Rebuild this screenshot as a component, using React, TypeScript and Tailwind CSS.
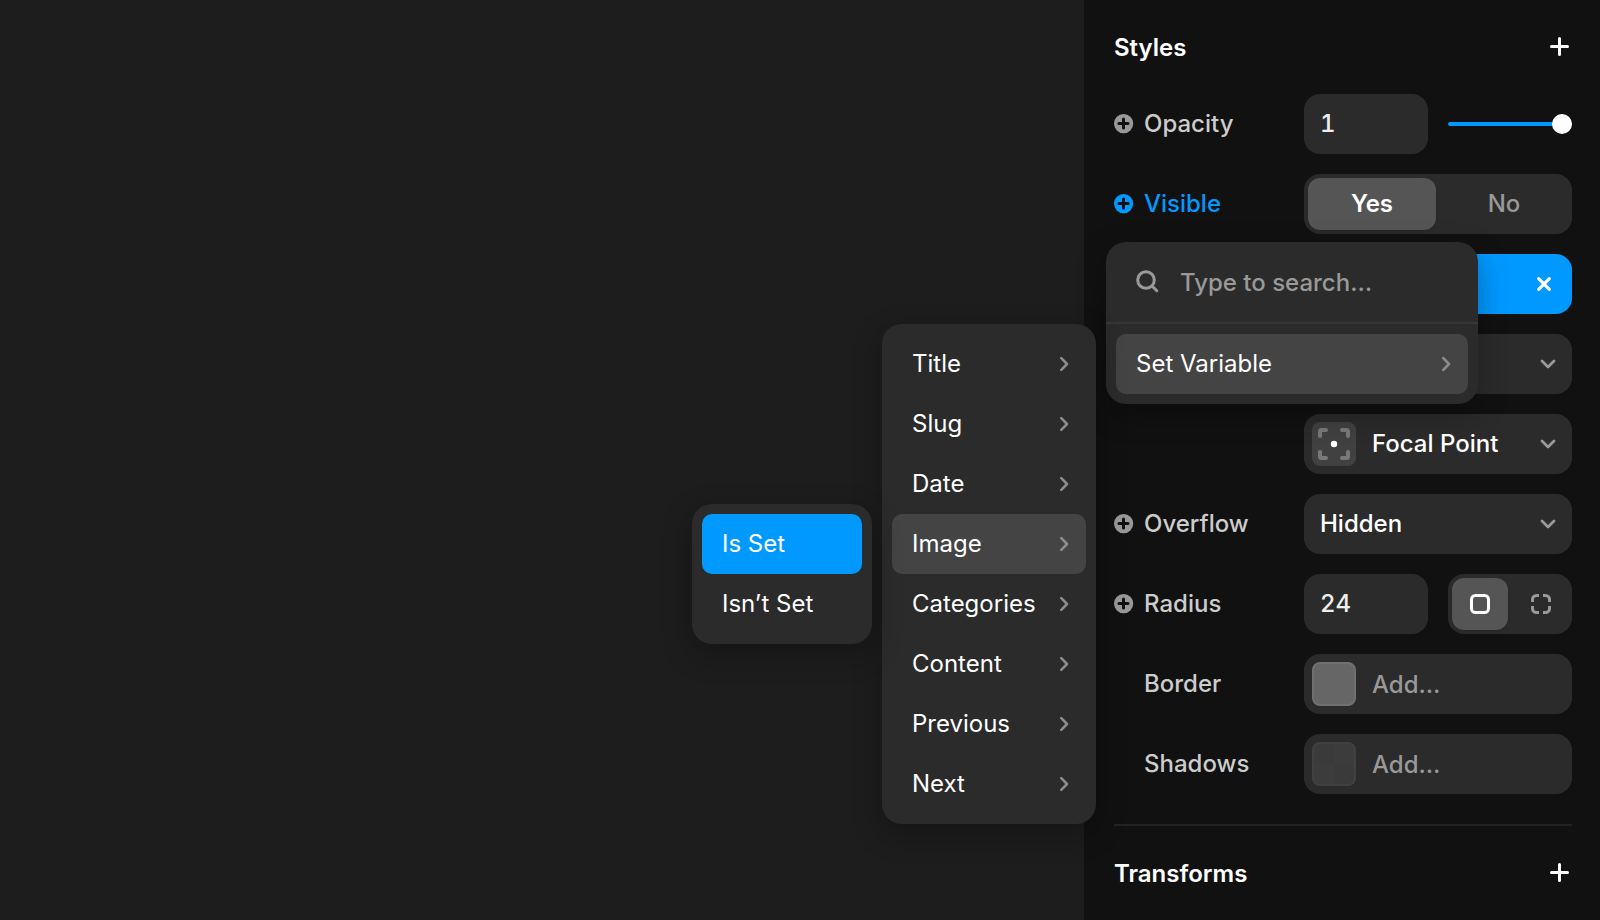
import { useId, type ReactNode } from "react";

function PlusIcon() {
  return (
    <svg width="20" height="20" viewBox="0 0 20 20" fill="none" stroke="currentColor" strokeWidth="3" strokeLinecap="round" aria-hidden="true">
      <path d="M9.500 1.500v16M1.500 9.500h16" />
    </svg>
  );
}

function AddBadgeIcon() {
  return (
    <svg width="20" height="20" viewBox="0 0 20 20" aria-hidden="true">
      <circle cx="9.600" cy="9.600" r="9.600" fill="currentColor" />
      <path d="M9.500 4.900v9.200M4.900 9.500h9.200" stroke="#111" strokeWidth="3" strokeLinecap="round" />
    </svg>
  );
}

function ChevronRight() {
  return (
    <svg width="10" height="16" viewBox="0 0 10 16" fill="none" stroke="#8c8c8c" strokeWidth="2.6" strokeLinecap="round" strokeLinejoin="round" aria-hidden="true">
      <path d="M1.300 2.200L7 8l-5.700 5.800" />
    </svg>
  );
}

function ChevronDown() {
  return (
    <svg className="pointer-events-none col-start-1 row-start-1 mr-4 justify-self-end" width="16" height="12" viewBox="0 0 16 12" fill="none" stroke="#999" strokeWidth="2.8" strokeLinecap="round" strokeLinejoin="round" aria-hidden="true">
      <path d="M2 3l6 6 6-6" />
    </svg>
  );
}

function CloseIcon() {
  return (
    <svg width="16" height="16" viewBox="0 0 16 16" fill="none" stroke="currentColor" strokeWidth="3.2" strokeLinecap="round" aria-hidden="true">
      <path d="M2.7 2.7l10.6 10.6M13.3 2.7L2.7 13.3" />
    </svg>
  );
}

function SearchIcon() {
  return (
    <svg className="shrink-0" width="24" height="24" viewBox="0 0 24 24" fill="none" stroke="#999" strokeWidth="3" strokeLinecap="round" aria-hidden="true">
      <circle cx="10" cy="10" r="8.300" />
      <path d="M16.200 16.200l4.600 4.600" />
    </svg>
  );
}

function FocalIcon() {
  return (
    <svg width="32" height="32" viewBox="0 0 32 32" fill="none" aria-hidden="true">
      <path
        d="M2 8V3.500A1.500 1.500 0 0 1 3.500 2H8M24 2h4.500A1.500 1.500 0 0 1 30 3.500V8M30 24v4.500a1.500 1.500 0 0 1-1.500 1.500H24M8 30H3.500A1.500 1.500 0 0 1 2 28.500V24"
        stroke="#797979"
        strokeWidth="4"
        strokeLinecap="round"
      />
      <circle cx="16" cy="16" r="3.200" fill="#fff" />
    </svg>
  );
}

function UniformCornerIcon() {
  return (
    <svg width="20" height="20" viewBox="0 0 20 20" fill="none" stroke="currentColor" strokeWidth="3" aria-hidden="true">
      <rect x="1.500" y="1.500" width="17" height="17" rx="4" />
    </svg>
  );
}

function SplitCornerIcon() {
  return (
    <svg width="22" height="20" viewBox="-2 0 22 20" fill="none" stroke="currentColor" strokeWidth="3" aria-hidden="true">
      <path d="M1.500 8V5.500a4 4 0 0 1 4-4H8M12 1.500h2.500a4 4 0 0 1 4 4V8M18.500 12v2.500a4 4 0 0 1-4 4H12M8 18.500H5.500a4 4 0 0 1-4-4V12" />
    </svg>
  );
}

function SectionHeader({ title }: { title: string }) {
  return (
    <header className="flex h-[94px] items-center justify-between text-white">
      <h2 className="pt-0.5 font-semibold">{title}</h2>
      <button type="button" aria-label={`Add ${title}`} className="px-0.5">
        <PlusIcon />
      </button>
    </header>
  );
}

function Row({
  label,
  htmlFor,
  addable = false,
  active = false,
  children,
}: {
  label?: string;
  htmlFor?: string;
  addable?: boolean;
  active?: boolean;
  children: ReactNode;
}) {
  return (
    <div className="grid min-h-[60px] grid-cols-[190px_1fr] items-center">
      <div className={active ? "flex items-center gap-2.5 text-[#0099ff]" : "flex items-center gap-2.5 text-[#ccc]"}>
        <span className="flex w-5 shrink-0">
          {addable && (
            <button type="button" aria-label={`${label} options`} className={active ? "text-[#0099ff]" : "text-[#999]"}>
              <AddBadgeIcon />
            </button>
          )}
        </span>
        {label && <label htmlFor={htmlFor}>{label}</label>}
      </div>
      {children}
    </div>
  );
}

const numberField = "h-[60px] w-full min-w-0 rounded-2xl bg-[#2b2b2b] px-4 pb-0.5 text-[#eee] tabular-nums outline-none";
const segment =
  "flex cursor-pointer items-center justify-center rounded-xl text-[#999] has-checked:bg-[#555] has-checked:text-white has-checked:shadow-sm";

function Submenu({ children, width }: { children: ReactNode; width: string }) {
  return (
    <ul
      role="menu"
      className={`absolute -top-2.5 right-full mr-5 rounded-[20px] bg-[#2b2b2b] p-2.5 shadow-[0_10px_30px_rgba(0,0,0,0.3)] ${width}`}
    >
      {children}
    </ul>
  );
}

function MenuItem({
  label,
  tone = "plain",
  arrow = true,
  children,
}: {
  label: string;
  tone?: "plain" | "hover" | "selected";
  arrow?: boolean;
  children?: ReactNode;
}) {
  const tones = { plain: "", hover: "bg-[#444]", selected: "bg-[#0099ff]" };
  return (
    <li role="none" className="relative">
      <button
        type="button"
        role="menuitem"
        className={`flex h-[60px] w-full items-center justify-between rounded-[10px] pr-4 pl-5 font-normal text-white ${tones[tone]}`}
      >
        {label}
        {arrow && <ChevronRight />}
      </button>
      {children}
    </li>
  );
}

function VariablePopover() {
  const fields = ["Title", "Slug", "Date", "Image", "Categories", "Content", "Previous", "Next"];
  return (
    <div className="absolute top-full -left-2 z-10 mt-2 w-[372px] rounded-[20px] bg-[#2b2b2b] shadow-[0_10px_30px_rgba(0,0,0,0.3)]">
      <div className="flex h-[82px] items-center gap-5 border-b-2 border-[#363636] pr-5 pl-[30px]">
        <SearchIcon />
        <input
          type="text"
          aria-label="Search"
          placeholder="Type to search…"
          className="w-full min-w-0 bg-transparent pt-0.5 text-white outline-none placeholder:text-[#999]"
        />
      </div>
      <ul role="menu" className="p-2.5">
        <MenuItem label="Set Variable" tone="hover">
          <Submenu width="w-[214px]">
            {fields.map((field) =>
              field === "Image" ? (
                <MenuItem key={field} label={field} tone="hover">
                  <Submenu width="w-[180px]">
                    <MenuItem label="Is Set" tone="selected" arrow={false} />
                    <MenuItem label="Isn’t Set" arrow={false} />
                  </Submenu>
                </MenuItem>
              ) : (
                <MenuItem key={field} label={field} />
              ),
            )}
          </Submenu>
        </MenuItem>
      </ul>
    </div>
  );
}

export default function App() {
  const id = useId();
  return (
    <div className="flex min-h-screen overflow-hidden bg-[#1d1d1d] font-['Inter',sans-serif] text-2xl leading-8 font-medium">
      <main className="flex-1" />
      <aside className="w-[516px] shrink-0 bg-[#111] pr-7 pl-[30px]">
        <section className="border-b-2 border-[#222] pb-[30px]">
          <SectionHeader title="Styles" />
          <div className="flex flex-col gap-5">
            <Row label="Opacity" htmlFor={`${id}-opacity`} addable>
              <div className="grid grid-cols-2 items-center gap-5">
                <input id={`${id}-opacity`} type="text" defaultValue="1" className={numberField} />
                <input
                  type="range"
                  aria-label="Opacity slider"
                  min={0}
                  max={1}
                  step={0.01}
                  defaultValue={1}
                  className="h-1 w-full min-w-0 appearance-none rounded-full bg-[#0099ff] [&::-webkit-slider-thumb]:size-5 [&::-webkit-slider-thumb]:appearance-none [&::-webkit-slider-thumb]:rounded-full [&::-webkit-slider-thumb]:bg-white"
                />
              </div>
            </Row>

            <div className="relative">
              <Row label="Visible" htmlFor={`${id}-yes`} addable active>
                <div role="radiogroup" aria-label="Visible" className="grid h-[60px] grid-cols-2 gap-1 rounded-2xl bg-[#2b2b2b] p-1">
                  <label className={`${segment} has-checked:font-semibold`}>
                    <input id={`${id}-yes`} type="radio" name={`${id}-visible`} defaultChecked className="sr-only" />
                    Yes
                  </label>
                  <label className={segment}>
                    <input type="radio" name={`${id}-visible`} className="sr-only" />
                    No
                  </label>
                </div>
              </Row>
              <VariablePopover />
            </div>

            <Row>
              <div className="flex h-[60px] items-center justify-end rounded-2xl bg-[#0099ff] px-5 text-white">
                <button type="button" aria-label="Clear">
                  <CloseIcon />
                </button>
              </div>
            </Row>

            <Row>
              <div className="grid items-center">
                <select aria-label="Sizing" className="col-start-1 row-start-1 h-[60px] w-full appearance-none rounded-2xl bg-[#2b2b2b] px-4 text-white">
                  <option></option>
                </select>
                <ChevronDown />
              </div>
            </Row>

            <Row>
              <div className="grid items-center">
                <select aria-label="Position" className="col-start-1 row-start-1 h-[60px] w-full appearance-none rounded-2xl bg-[#2b2b2b] pr-10 pl-[68px] text-white">
                  <option>Focal Point</option>
                </select>
                <span className="pointer-events-none col-start-1 row-start-1 ml-2 flex size-11 items-center justify-center rounded-lg bg-[#414141]">
                  <FocalIcon />
                </span>
                <ChevronDown />
              </div>
            </Row>

            <Row label="Overflow" htmlFor={`${id}-overflow`} addable>
              <div className="grid items-center">
                <select id={`${id}-overflow`} className="col-start-1 row-start-1 h-[60px] w-full appearance-none rounded-2xl bg-[#2b2b2b] px-4 text-white">
                  <option>Hidden</option>
                </select>
                <ChevronDown />
              </div>
            </Row>

            <Row label="Radius" htmlFor={`${id}-radius`} addable>
              <div className="grid grid-cols-2 gap-5">
                <input id={`${id}-radius`} type="text" defaultValue="24" className={numberField} />
                <div role="radiogroup" aria-label="Radius mode" className="grid h-[60px] grid-cols-2 gap-1 rounded-2xl bg-[#2b2b2b] p-1">
                  <label className={segment}>
                    <input type="radio" name={`${id}-corners`} aria-label="All corners" defaultChecked className="sr-only" />
                    <UniformCornerIcon />
                  </label>
                  <label className={segment}>
                    <input type="radio" name={`${id}-corners`} aria-label="Per corner" className="sr-only" />
                    <SplitCornerIcon />
                  </label>
                </div>
              </div>
            </Row>

            <Row label="Border" htmlFor={`${id}-border`}>
              <button id={`${id}-border`} type="button" className="flex h-[60px] items-center gap-4 rounded-2xl bg-[#2b2b2b] px-2 text-[#999]">
                <span className="size-11 rounded-lg border-2 border-[#707070] bg-[#666]" />
                <span className="pt-0.5">Add…</span>
              </button>
            </Row>

            <Row label="Shadows" htmlFor={`${id}-shadows`}>
              <button id={`${id}-shadows`} type="button" className="flex h-[60px] items-center gap-4 rounded-2xl bg-[#2b2b2b] px-2 text-[#999]">
                <span className="size-11 rounded-lg border-2 border-[#414141] bg-[conic-gradient(#3c3c3c_25%,#3a3a3a_0_50%,#3c3c3c_0_75%,#3a3a3a_0)]" />
                <span className="pt-0.5">Add…</span>
              </button>
            </Row>
          </div>
        </section>
        <section>
          <SectionHeader title="Transforms" />
        </section>
      </aside>
    </div>
  );
}
